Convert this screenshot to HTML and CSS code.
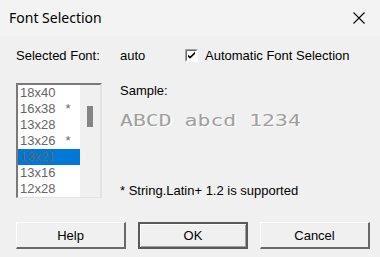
FILE: index.html
```html
<!DOCTYPE html>
<html lang="en">
<head>
    <meta charset="UTF-8">
    <meta name="viewport" content="width=device-width, initial-scale=1.0">
    <title>Font Selection</title>
    <link rel="stylesheet" href="styles.css">
</head>
<body>
    <div class="titlebar">
        <span class="title">Font Selection</span>
        <svg class="close" width="12" height="12" viewBox="0 0 12 12">
            <path d="M0.5 0.5 L11.5 11.5 M11.5 0.5 L0.5 11.5" stroke="#000" stroke-width="1.1" fill="none"/>
        </svg>
    </div>

    <div class="dialog">
        <div class="top-row">
            <span class="label">Selected Font:</span>
            <span class="value">auto</span>
            <label class="check">
                <svg width="13" height="13" viewBox="0 0 13 13">
                    <rect x="0" y="0" width="13" height="13" fill="#fff"/>
                    <path d="M0.5 12.5 V0.5 H12.5" stroke="#a0a0a0" fill="none"/>
                    <path d="M1.5 11.5 V1.5 H11.5" stroke="#696969" fill="none"/>
                    <path d="M3 5.5 L5 7.5 L10 2.8 V5 L5 9.7 L3 7.7 Z" fill="#000"/>
                </svg>
                <span>Automatic Font Selection</span>
            </label>
        </div>

        <div class="middle">
            <div class="listbox">
                <ul class="items">
                    <li>18x40</li>
                    <li>16x38<span class="star">*</span></li>
                    <li>13x28</li>
                    <li>13x26<span class="star">*</span></li>
                    <li class="selected">13x21</li>
                    <li>13x16</li>
                    <li>12x28</li>
                </ul>
                <div class="scrollbar"><div class="thumb"></div></div>
            </div>

            <div class="preview">
                <div class="sample-label">Sample:</div>
                <div class="sample">ABCD abcd 1234</div>
                <div class="note">* String.Latin+ 1.2 is supported</div>
            </div>
        </div>

        <div class="buttons">
            <button>Help</button>
            <button class="default">OK</button>
            <button>Cancel</button>
        </div>
    </div>
</body>
</html>
```

FILE: styles.css
```css
body {
    margin: 0;
    width: 380px;
    height: 257px;
    overflow: hidden;
    background-color: #f0f0f0;
    font-family: "Liberation Sans", Arial, sans-serif;
    font-size: 13px;
    color: #000;
}

.titlebar {
    height: 36px;
    display: flex;
    align-items: center;
    justify-content: space-between;
    padding: 0 15px 0 9px;
    background-color: #f3f3f3;
}

.title {
    font-family: "Noto Sans", "Open Sans", sans-serif;
    font-size: 14px;
    margin-top: -1px;
}

.close {
    display: block;
    margin-top: -1px;
}

.dialog {
    padding: 11px 10px 0 16px;
}

.top-row {
    display: flex;
    align-items: center;
    height: 16px;
}

.label {
    width: 104px;
}

.value {
    width: 65px;
}

.check {
    display: flex;
    align-items: center;
    gap: 7px;
}

.check svg {
    display: block;
    margin-top: 1px;
}

.middle {
    display: flex;
    margin-top: 20px;
    gap: 18px;
}

.listbox {
    display: flex;
    width: 82px;
    height: 112px;
    border-top: 2px solid #7a7a7a;
    border-left: 2px solid #7a7a7a;
    border-right: 2px solid #e3e3e3;
    border-bottom: 1px solid #e3e3e3;
    background-color: #fff;
}

.items {
    list-style: none;
    margin: 0;
    padding: 0;
    width: 62px;
    overflow: hidden;
    background-color: #fff;
}

.items li {
    height: 16px;
    line-height: 16px;
    padding-left: 2px;
    color: #666;
    font-size: 13px;
    white-space: nowrap;
}

.items li.selected {
    background-color: #0078d7;
}

.star {
    margin-left: 10px;
}

.scrollbar {
    flex: 1;
    background-color: #f0f0f0;
    padding-top: 21px;
    display: flex;
    justify-content: center;
}

.thumb {
    width: 6px;
    height: 21px;
    background-color: #858585;
}

.preview {
    display: flex;
    flex-direction: column;
}

.sample-label {
    line-height: 16px;
}

.sample {
    margin-top: 14px;
    font-family: "DejaVu Sans Mono", monospace;
    font-size: 15px;
    line-height: 16px;
    color: #a0a0a0;
    text-shadow: 1px 1px 0 #fff;
    white-space: nowrap;
    transform: scaleX(1.43);
    transform-origin: left center;
}

.note {
    margin-top: 54px;
    line-height: 16px;
}

.buttons {
    display: flex;
    gap: 12px;
    margin-top: 23px;
}

button {
    width: 110px;
    height: 27px;
    padding: 0;
    font-family: "Liberation Sans", Arial, sans-serif;
    font-size: 13px;
    color: #000;
    background-color: #f0f0f0;
    border-top: 1px solid #fff;
    border-left: 1px solid #fff;
    border-right: 2px solid #696969;
    border-bottom: 2px solid #696969;
}

button.default {
    border: 2px solid #5a5a5a;
    box-shadow: inset 1px 1px 0 #fff, inset -1px -1px 0 #a0a0a0;
}
```
